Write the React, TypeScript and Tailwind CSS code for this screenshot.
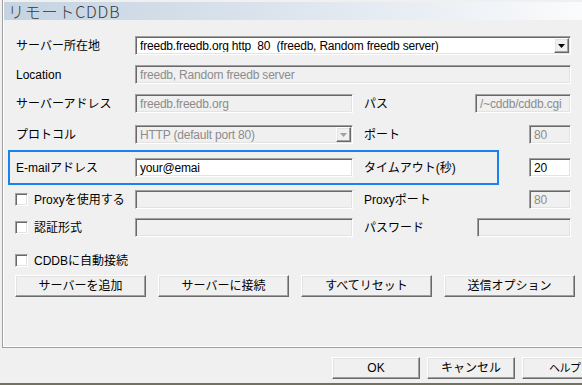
import React from "react";

const sunken =
  "border border-t-[#a0a0a0] border-l-[#a0a0a0] border-b-white border-r-white shadow-[inset_1px_1px_0_#696969,inset_-1px_-1px_0_#e3e3e3]";
const raised =
  "border border-t-white border-l-white border-b-[#696969] border-r-[#696969] shadow-[inset_-1px_-1px_0_#a0a0a0,inset_1px_1px_0_#e3e3e3] bg-[#f0f0f0]";

function Field({
  text,
  w,
  disabled,
  className = "",
}: {
  text?: string;
  w: string;
  disabled?: boolean;
  className?: string;
}) {
  return (
    <div
      className={`${sunken} ${w} h-[19px] flex items-center pl-[4px] whitespace-pre overflow-hidden tracking-[-0.2px] ${
        disabled ? "bg-[#f0f0f0] text-[#8c8c8c]" : "bg-white text-black"
      } ${className}`}
    >
      {text}
    </div>
  );
}

function Check({ label }: { label: string }) {
  return (
    <div className="flex items-center w-[119px] shrink-0">
      <div className={`${sunken} w-[13px] h-[13px] bg-white ml-[-1px]`} />
      <span className="ml-[6px]">{label}</span>
    </div>
  );
}

function Btn({ label, w, className = "" }: { label: string; w: string; className?: string }) {
  return (
    <div className={`${raised} ${w} h-[22px] flex items-center justify-center shrink-0 ${className}`}>
      {label}
    </div>
  );
}

export default function App() {
  return (
    <div
      className="w-[582px] h-[385px] bg-[#f0f0f0] overflow-hidden flex flex-col text-[12px] text-black leading-none"
      style={{ fontFamily: '"Liberation Sans","Noto Sans CJK JP",sans-serif' }}
    >
      <div className="ml-[2px] h-[348px] border-l border-b border-[#a0a0a0] shadow-[inset_1px_-1px_0_#fff] flex flex-col shrink-0">
        {/* Title */}
        <div className="mt-[2px] ml-[1px] h-[18px] bg-gradient-to-r from-[#c5d3e1] via-[#dde5ee] to-[#fafbfc] flex items-center pl-[4px]">
          <span
            className="text-[16px] leading-[16px] text-[#3a3a3a] font-light tracking-[0.8px]"
            style={{ fontFamily: '"Noto Sans CJK JP","Liberation Sans",sans-serif' }}
          >
            リモートCDDB
          </span>
        </div>

        {/* Row 1 */}
        <div className="mt-[16px] h-[19px] flex items-center pl-[13px] pr-[11px]">
          <span className="w-[119px] shrink-0">サーバー所在地</span>
          <div className={`${sunken} flex-1 h-[19px] bg-white flex items-center pl-[4px] pr-[1px] whitespace-pre tracking-[-0.2px]`}>
            <span className="flex-1 overflow-hidden">freedb.freedb.org http  80  (freedb, Random freedb server)</span>
            <div className={`${raised} w-[15px] h-[15px] flex items-center justify-center`}>
              <svg width="7" height="4" viewBox="0 0 7 4">
                <path d="M0 0H7L3.5 4Z" fill="#000" />
              </svg>
            </div>
          </div>
        </div>

        {/* Row 2 */}
        <div className="mt-[10px] h-[19px] flex items-center pl-[13px] pr-[11px]">
          <span className="w-[119px] shrink-0">Location</span>
          <Field text="freedb, Random freedb server" w="flex-1" disabled />
        </div>

        {/* Row 3 */}
        <div className="mt-[10px] h-[19px] flex items-center pl-[13px] pr-[11px]">
          <span className="w-[119px] shrink-0">サーバーアドレス</span>
          <Field text="freedb.freedb.org" w="w-[218px]" disabled />
          <span className="ml-[11px]">パス</span>
          <Field text="/~cddb/cddb.cgi" w="w-[96px]" disabled className="ml-auto" />
        </div>

        {/* Row 4 */}
        <div className="mt-[12px] h-[19px] flex items-center pl-[13px] pr-[11px]">
          <span className="w-[119px] shrink-0">プロトコル</span>
          <div className={`${sunken} w-[218px] h-[19px] flex items-center pl-[4px] pr-[1px] text-[#8c8c8c] tracking-[-0.2px]`}>
            <span className="flex-1">HTTP (default port 80)</span>
            <div className={`${raised} w-[15px] h-[15px] flex items-center justify-center`}>
              <svg width="7" height="4" viewBox="0 0 7 4">
                <path d="M0 0H7L3.5 4Z" fill="#a0a0a0" />
              </svg>
            </div>
          </div>
          <span className="ml-[11px]">ポート</span>
          <Field text="80" w="w-[42px]" disabled className="ml-auto" />
        </div>

        {/* Row 5 - E-mail (highlighted) */}
        <div className="mt-[6px] h-[35px] flex items-center pl-[5px] pr-[11px]">
          <div className="w-[491px] h-[35px] border-2 border-[#1a82f0] flex items-center pl-[6px]">
            <span className="w-[119px] shrink-0">E-mailアドレス</span>
            <Field text="your@emai" w="w-[218px]" />
            <span className="ml-[11px]">タイムアウト(秒)</span>
          </div>
          <Field text="20" w="w-[42px]" className="ml-auto" />
        </div>

        {/* Row 6 */}
        <div className="mt-[5px] h-[19px] flex items-center pl-[13px] pr-[11px]">
          <Check label="Proxyを使用する" />
          <Field w="w-[218px]" disabled />
          <span className="ml-[11px]">Proxyポート</span>
          <Field text="80" w="w-[42px]" disabled className="ml-auto" />
        </div>

        {/* Row 7 */}
        <div className="mt-[9px] h-[19px] flex items-center pl-[13px] pr-[11px]">
          <Check label="認証形式" />
          <Field w="w-[218px]" disabled />
          <span className="ml-[11px]">パスワード</span>
          <Field w="w-[94px]" disabled className="ml-auto" />
        </div>

        {/* Row 8 */}
        <div className="mt-[14px] h-[19px] flex items-center pl-[13px]">
          <div className={`${sunken} w-[13px] h-[13px] bg-white ml-[-1px]`} />
          <span className="ml-[6px]">CDDBに自動接続</span>
        </div>

        {/* Buttons */}
        <div className="mt-[5px] flex pl-[12px] gap-[12px]">
          <Btn label="サーバーを追加" w="w-[131px]" />
          <Btn label="サーバーに接続" w="w-[131px]" />
          <Btn label="すべてリセット" w="w-[131px]" />
          <Btn label="送信オプション" w="w-[131px]" />
        </div>
      </div>

      {/* Bottom buttons */}
      <div className="mt-[9px] flex pl-[332px] gap-[7px] shrink-0">
        <Btn label="OK" w="w-[88px]" />
        <Btn label="キャンセル" w="w-[88px]" />
        <Btn label="ヘルプ" w="w-[88px]" className="justify-start pl-[26px] text-[11px] tracking-[-0.5px]" />
      </div>
      <div className="mt-auto h-[2px] bg-[#72725e] shrink-0" />
    </div>
  );
}
